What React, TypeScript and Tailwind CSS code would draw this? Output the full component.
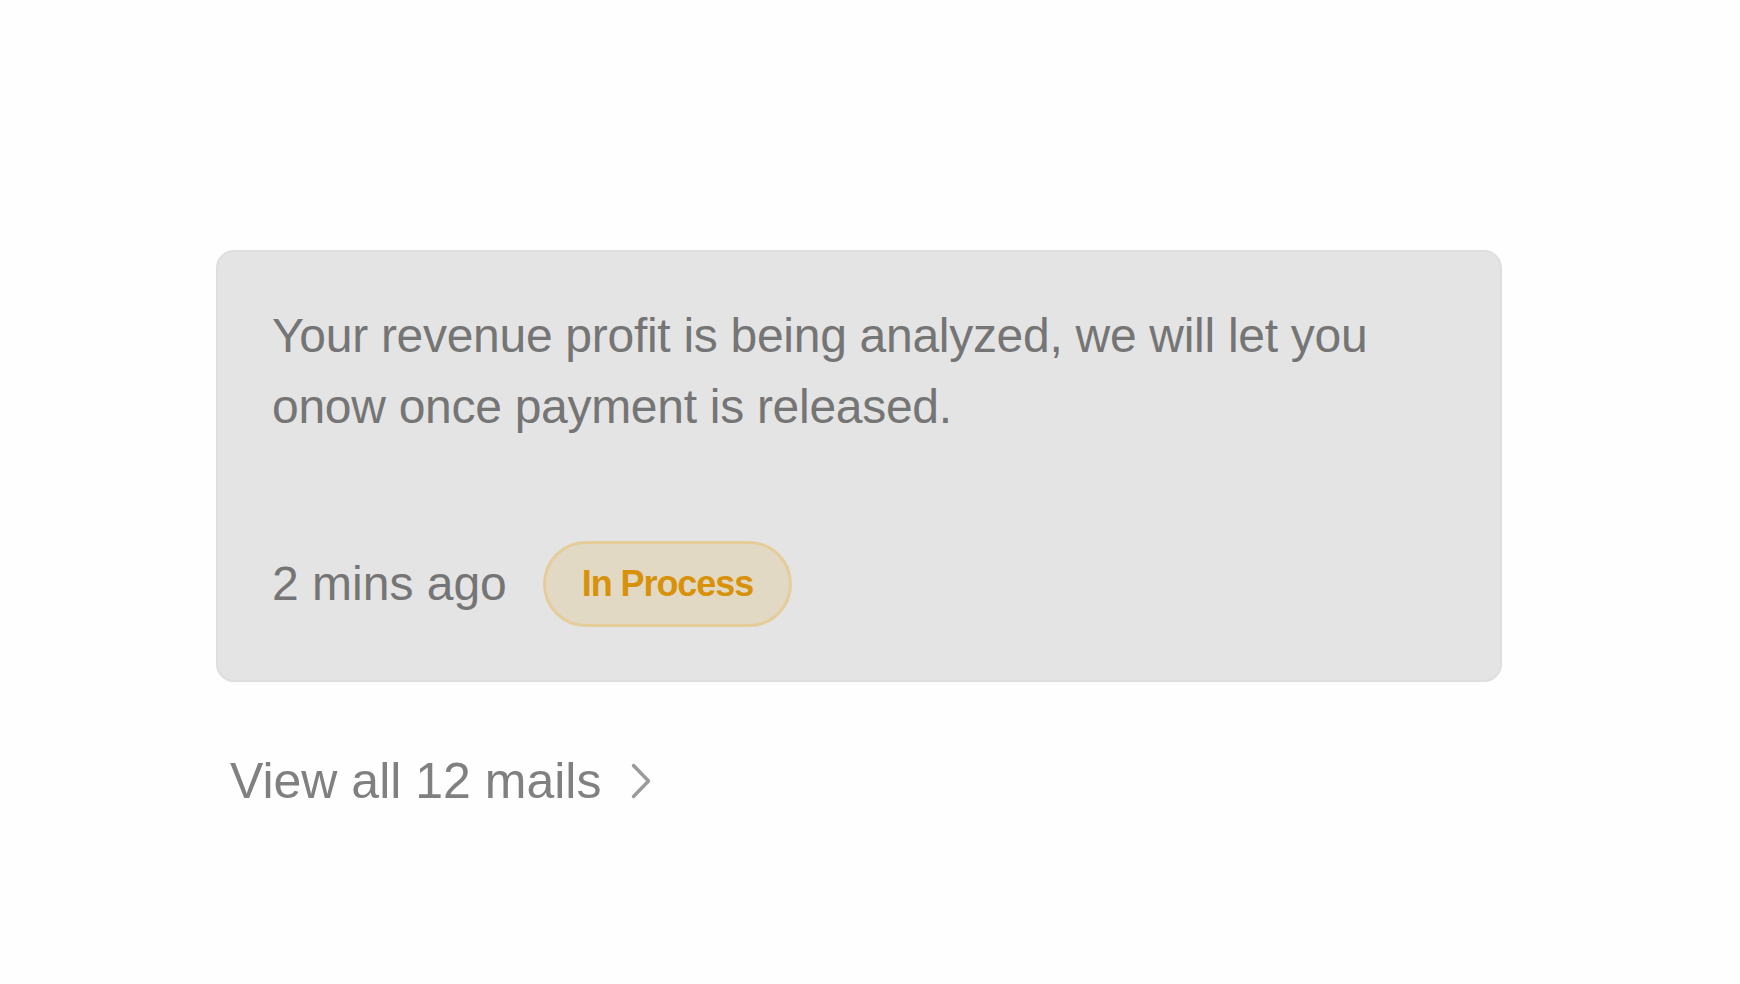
import React from "react";

/** Notification card with status pill + "view all" link below it. */
function StatusPill({ label }: { label: string }) {
  return (
    <span className="inline-flex h-[86px] items-center rounded-full border-[3px] border-[#e4cd9b] bg-[#e2d9c4] px-9 text-[36px] font-bold leading-none tracking-[-0.03em] text-[#d8920a]">
      {label}
    </span>
  );
}

function ChevronRight() {
  return (
    <svg width="20" height="36" viewBox="0 0 20 36" fill="none" className="shrink-0">
      <path
        d="M2.5 2.5 L17.5 18 L2.5 33.5"
        stroke="#9b9b9b"
        strokeWidth="3.5"
        strokeLinecap="round"
        strokeLinejoin="round"
      />
    </svg>
  );
}

export default function App() {
  return (
    <div
      className="min-h-screen w-full bg-[#fefefe] pt-[250px]"
      style={{ fontFamily: '"Liberation Sans", Arial, sans-serif' }}
    >
      <div className="ml-[216px] w-[1286px]">
        <div className="rounded-[18px] border-2 border-[#dedede] bg-[#e4e4e4] pl-[54px] pr-[56px] pt-[48px] pb-[53px]">
          <p className="text-[48px] leading-[71px] tracking-[-0.006em] text-[#757575]">
            Your revenue profit is being analyzed, we will let you
            <br />
            onow once payment is released.
          </p>
          <div className="mt-[99px] flex items-center gap-[36px]">
            <span className="text-[48px] leading-none text-[#757575]">2 mins ago</span>
            <StatusPill label="In Process" />
          </div>
        </div>

        <a href="#" className="ml-[14px] mt-[74px] flex items-center gap-[30px]">
          <span className="text-[50px] leading-none text-[#808080]">View all 12 mails</span>
          <ChevronRight />
        </a>
      </div>
    </div>
  );
}
